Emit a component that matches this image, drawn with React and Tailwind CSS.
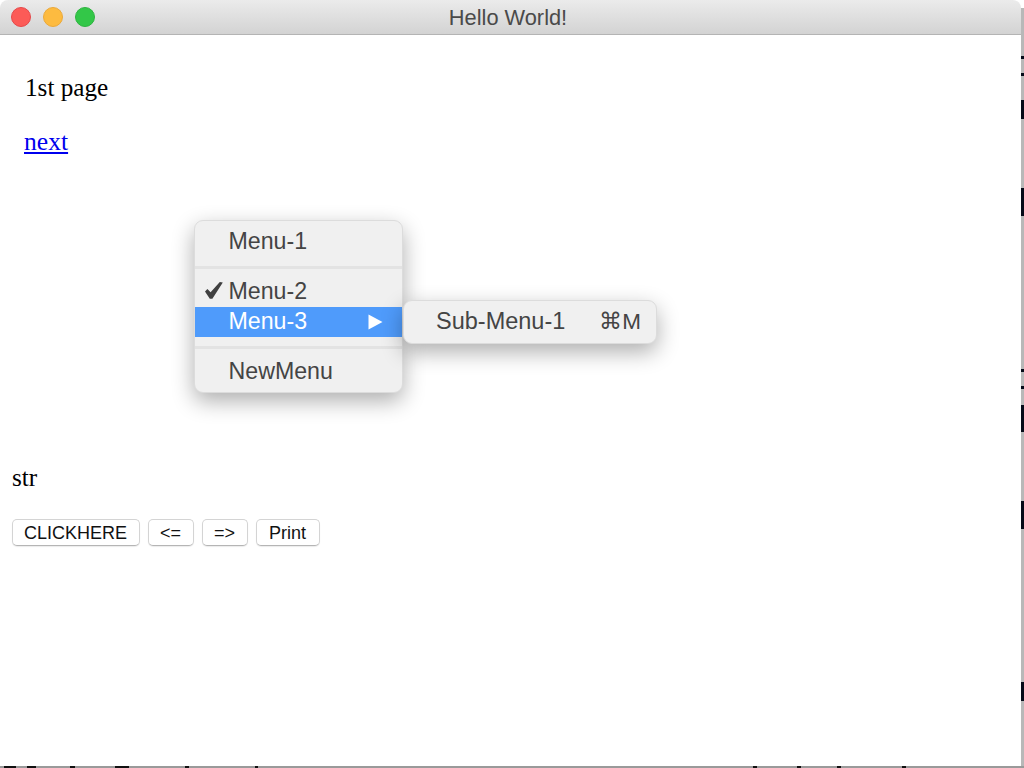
import React from 'react';

// desktop content peeking out past the window edge
const rightMarks = [
  [56, 3], [73, 3], [100, 19], [188, 28], [369, 3], [386, 3], [405, 27], [501, 28], [682, 19],
];
const bottomMarks = [
  [4, 12], [27, 9], [70, 5], [115, 14], [185, 4], [255, 3], [753, 4], [797, 4], [837, 4], [902, 4],
];

const MenuRow = ({ label, checked, active, children }) => (
  <div className={`flex items-center h-[30px] pr-[24px] ${active ? 'bg-[#4f9bfb] text-white' : 'text-[#444444]'}`}>
    <div className="w-[34px] flex justify-end pr-[6px]">
      {checked && (
        <svg width="18" height="17" viewBox="0 0 18 17" className="mt-[-3px]">
          <path d="M0 9.5 L2.4 7 L5.6 10.2 L14.8 0 L17.8 0.5 L7.4 16.8 L4.8 16.8 Z" fill="#404040" />
        </svg>
      )}
    </div>
    <span className="pb-[2px] ml-[-0.5px]">{label}</span>
    {children}
  </div>
);

const Separator = () => (
  <div className="h-[20px] flex items-center">
    <div className="w-full h-[3px] bg-[#e3e3e3]" />
  </div>
);

const Button = ({ label, width }) => (
  <button
    style={{ width }}
    className="h-[27px] bg-white rounded-[5px] border border-[#d4d4d4] border-b-[#b5b5b5] shadow-[0_1px_1px_rgba(0,0,0,0.08)] text-[18px] leading-none text-[#111111] text-center pr-[1px]"
  >
    {label}
  </button>
);

export default function App() {
  return (
    <div className="relative w-[1024px] h-[768px] overflow-hidden bg-white font-['Liberation_Serif',serif]">
      <div className="absolute top-[8px] bottom-0 right-0 w-[3px] bg-[#b8b8b8]">
        {rightMarks.map(([y, h]) => (
          <div key={y} className="absolute left-0 w-full bg-[#050a18]" style={{ top: y - 8, height: h }} />
        ))}
      </div>
      <div className="absolute bottom-0 left-0 right-0 h-[2px] bg-[#9a9a9a]">
        {bottomMarks.map(([x, w]) => (
          <div key={x} className="absolute top-0 h-full bg-[#111111]" style={{ left: x, width: w }} />
        ))}
      </div>

      <div className="relative w-[1021px] h-[766px] bg-white rounded-[8px] overflow-hidden">
        {/* Title bar */}
        <div className="relative h-[35px] flex items-center justify-center pr-[5px] pt-[2px] border-b border-[#b4b4b4] bg-gradient-to-b from-[#ebebeb] to-[#d3d3d3]">
          <div className="absolute left-[11px] top-[7px] flex gap-[12px]">
            <div className="w-[20px] h-[20px] rounded-full bg-[#fc5b57] border border-[#e5484a]" />
            <div className="w-[20px] h-[20px] rounded-full bg-[#fdbb40] border border-[#eaa83a]" />
            <div className="w-[20px] h-[20px] rounded-full bg-[#33c748] border border-[#2db33f]" />
          </div>
          <span className="font-['Liberation_Sans',sans-serif] text-[21.8px] text-[#4a4a4a]">Hello World!</span>
        </div>

        {/* Page */}
        <div className="text-[25.2px] leading-[30px] text-black">
          <p className="pl-[25px] pt-[38px]">1st page</p>
          <p className="pl-[24px] pt-[24px] text-[25.6px]">
            <a href="#" className="text-[#0000ee] underline">next</a>
          </p>
          <p className="pl-[12px] pt-[306px]">str</p>
          <div className="flex gap-[8px] pl-[12px] pt-[26px] font-['Liberation_Sans',sans-serif]">
            <Button label="CLICKHERE" width={128} />
            <Button label="<=" width={46} />
            <Button label="=>" width={46} />
            <Button label="Print" width={64} />
          </div>
        </div>

        {/* Context menu */}
        <div className="absolute left-[194px] top-[220px] w-[209px] pt-[6px] pb-[5px] rounded-[9px] bg-[#f0f0f0] border border-[#dcdcdc] shadow-[0_8px_22px_rgba(0,0,0,0.32)] font-['Liberation_Sans',sans-serif] text-[23.2px]">
          <MenuRow label="Menu-1" />
          <Separator />
          <MenuRow label="Menu-2" checked />
          <MenuRow label="Menu-3" active>
            <svg width="15" height="16" viewBox="0 0 15 16" className="ml-auto mr-[-5px]">
              <path d="M0.5 0.5 L14.5 8 L0.5 15.5 Z" fill="#ffffff" />
            </svg>
          </MenuRow>
          <Separator />
          <MenuRow label="NewMenu" />
        </div>

        {/* Submenu */}
        <div className="absolute left-[403px] top-[300px] w-[254px] py-[6px] rounded-[9px] bg-[#f0f0f0] border border-[#dcdcdc] shadow-[0_8px_22px_rgba(0,0,0,0.32)] font-['Liberation_Sans',sans-serif] text-[23.5px] text-[#444444]">
          <div className="flex items-center justify-between h-[30px] pl-[32px] pr-[15px]">
            <span>Sub-Menu-1</span>
            <span className="text-[22.5px]">⌘M</span>
          </div>
        </div>
      </div>
    </div>
  );
}
